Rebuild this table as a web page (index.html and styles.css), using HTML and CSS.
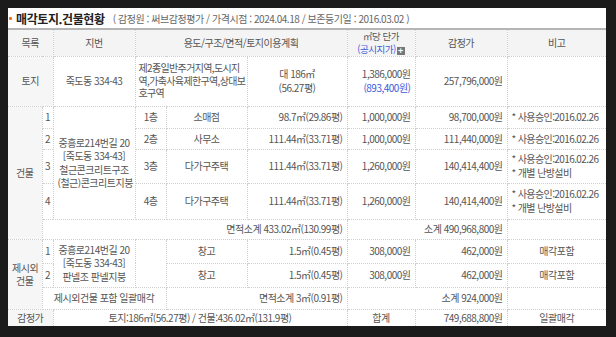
FILE: index.html
```html
<!DOCTYPE html>
<html lang="ko">
<head>
<meta charset="utf-8">
<title>매각토지.건물현황</title>
<link rel="stylesheet" href="styles.css">
</head>
<body>
<div class="panel">
  <div class="title-bar">
    <span class="bullet"></span>
    <span class="title">매각토지.건물현황</span>
    <span class="sub">( 감정원 : 써브감정평가 / 가격시점 : 2024.04.18 / 보존등기일 : 2016.03.02 )</span>
  </div>
  <table class="grid">
    <colgroup>
      <col class="w-label"><col class="w-no"><col class="w-addr"><col class="w-floor"><col class="w-use"><col class="w-area"><col class="w-unit"><col class="w-price"><col class="w-note">
    </colgroup>
    <thead>
      <tr class="h-head">
        <th colspan="2">목록</th>
        <th>지번</th>
        <th colspan="3">용도/구조/면적/토지이용계획</th>
        <th class="unit-head">㎡당 단가<br><span class="blue">(공시지가)</span><span class="plus">+</span></th>
        <th>감정가</th>
        <th>비고</th>
      </tr>
    </thead>
    <tbody>
      <tr class="h-land">
        <td colspan="2" class="label">토지</td>
        <td class="c">죽도동 334-43</td>
        <td colspan="2" class="l plan">제2종일반주거지역,도시지역,가축사육제한구역,상대보호구역</td>
        <td class="c">대 186㎡<br>(56.27평)</td>
        <td class="r">1,386,000원<br><span class="blue">(893,400원)</span></td>
        <td class="r">257,796,000원</td>
        <td></td>
      </tr>
      <tr class="h-b1">
        <td rowspan="5" class="label">건물</td>
        <td class="no">1</td>
        <td rowspan="4" class="c multi">중흥로214번길 20<br>[죽도동 334-43]<br>철근콘크리트구조<br>(철근)콘크리트지붕</td>
        <td class="c">1층</td>
        <td class="c">소매점</td>
        <td class="r">98.7㎡(29.86평)</td>
        <td class="r">1,000,000원</td>
        <td class="r">98,700,000원</td>
        <td class="note">* 사용승인:2016.02.26</td>
      </tr>
      <tr class="h-b2">
        <td class="no">2</td>
        <td class="c">2층</td>
        <td class="c">사무소</td>
        <td class="r">111.44㎡(33.71평)</td>
        <td class="r">1,000,000원</td>
        <td class="r">111,440,000원</td>
        <td class="note">* 사용승인:2016.02.26</td>
      </tr>
      <tr class="h-b3">
        <td class="no">3</td>
        <td class="c">3층</td>
        <td class="c">다가구주택</td>
        <td class="r">111.44㎡(33.71평)</td>
        <td class="r">1,260,000원</td>
        <td class="r">140,414,400원</td>
        <td class="note">* 사용승인:2016.02.26<br>* 개별 난방설비</td>
      </tr>
      <tr class="h-b4">
        <td class="no">4</td>
        <td class="c">4층</td>
        <td class="c">다가구주택</td>
        <td class="r">111.44㎡(33.71평)</td>
        <td class="r">1,260,000원</td>
        <td class="r">140,414,400원</td>
        <td class="note">* 사용승인:2016.02.26<br>* 개별 난방설비</td>
      </tr>
      <tr class="h-sub">
        <td colspan="5" class="r">면적소계 433.02㎡(130.99평)</td>
        <td colspan="2" class="r">소계 490,968,800원</td>
        <td></td>
      </tr>
      <tr class="h-e1">
        <td rowspan="3" class="label multi">제시외<br>건물</td>
        <td class="no">1</td>
        <td rowspan="2" class="c multi">중흥로214번길 20<br>[죽도동 334-43]<br>판넬조 판넬지붕</td>
        <td rowspan="2"></td>
        <td class="c">창고</td>
        <td class="r">1.5㎡(0.45평)</td>
        <td class="r">308,000원</td>
        <td class="r">462,000원</td>
        <td class="c">매각포함</td>
      </tr>
      <tr class="h-e2">
        <td class="no">2</td>
        <td class="c">창고</td>
        <td class="r">1.5㎡(0.45평)</td>
        <td class="r">308,000원</td>
        <td class="r">462,000원</td>
        <td class="c">매각포함</td>
      </tr>
      <tr class="h-all">
        <td colspan="3" class="c">제시외건물 포함 일괄매각</td>
        <td colspan="2" class="r">면적소계 3㎡(0.91평)</td>
        <td colspan="2" class="r">소계 924,000원</td>
        <td></td>
      </tr>
      <tr class="h-total">
        <td colspan="2" class="label">감정가</td>
        <td colspan="4" class="c">토지:186㎡(56.27평) / 건물:436.02㎡(131.9평)</td>
        <td class="c">합계</td>
        <td class="r">749,688,800원</td>
        <td class="c">일괄매각</td>
      </tr>
    </tbody>
  </table>
</div>
</body>
</html>
```
FILE: styles.css
```css
html, body {
  margin: 0;
  padding: 0;
}
body {
  background: #1b1b1b;
  padding: 8px 10px 11px 8px;
  font-family: "Noto Sans CJK KR", "Noto Sans", sans-serif;
  color: #555;
}
.panel {
  background: #fff;
  width: 598px;
  height: 318px;
  overflow: hidden;
}
.title-bar {
  height: 20px;
  display: flex;
  align-items: center;
  white-space: nowrap;
}
.bullet {
  width: 3px;
  height: 3px;
  background: #f26a1b;
  border-radius: 1px;
  margin: 0 4px 0 1px;
}
.title {
  font-size: 12px;
  font-weight: bold;
  letter-spacing: -0.4px;
  color: #222;
  margin-right: 8px;
}
.sub {
  font-size: 10px;
  letter-spacing: -0.45px;
  color: #666;
}
.grid {
  width: 598px;
  border-collapse: collapse;
  table-layout: fixed;
  font-size: 10px;
  letter-spacing: -0.5px;
  line-height: 14px;
}
.w-label { width: 34px; }
.w-no { width: 11px; }
.w-addr { width: 82px; }
.w-floor { width: 31px; }
.w-use { width: 81px; }
.w-area { width: 100px; }
.w-unit { width: 68px; }
.w-price { width: 92px; }
.w-note { width: 99px; }
.grid th, .grid td {
  border: 1px dotted #cfcfcf;
  padding: 0 4px;
  vertical-align: middle;
  overflow: hidden;
  white-space: nowrap;
}
.grid tr > :first-child { border-left: none; }
.grid tr > :last-child { border-right: none; }
.grid thead tr { border-top: 2px solid #b5b5b5; }
.grid th {
  background: #f4f4f4;
  font-weight: normal;
  color: #555;
  text-align: center;
}
.unit-head { line-height: 12.5px; font-size: 9.5px; }
.blue { color: #3d5bd9; }
.plus {
  display: inline-block;
  width: 8px;
  height: 8px;
  background: #777;
  color: #fff;
  font-size: 9px;
  line-height: 8px;
  font-weight: bold;
  letter-spacing: 0;
  text-align: center;
  margin-left: 1px;
  vertical-align: -1px;
}
.label {
  background: #f6f6f6;
  text-align: center;
}
.c { text-align: center; }
.r { text-align: right; }
.l { text-align: left; }
.grid td.multi { line-height: 13.5px; }
.grid td.plan {
  white-space: normal;
  padding: 0 1px 0 3px;
  letter-spacing: -0.65px;
  line-height: 12.5px;
}
.grid td.note {
  text-align: left;
  padding: 0 0 0 4px;
  letter-spacing: -0.6px;
  line-height: 14px;
}
.grid td.no {
  padding: 0;
  text-align: center;
}
.h-head { height: 27px; }
.h-land { height: 50px; }
.h-b1 { height: 22px; }
.h-b2 { height: 21px; }
.h-b3 { height: 34px; }
.h-b4 { height: 36px; }
.h-sub { height: 20px; }
.h-e1 { height: 24px; }
.h-e2 { height: 24px; }
.h-all { height: 22px; }
.h-total { height: 18px; }
```
